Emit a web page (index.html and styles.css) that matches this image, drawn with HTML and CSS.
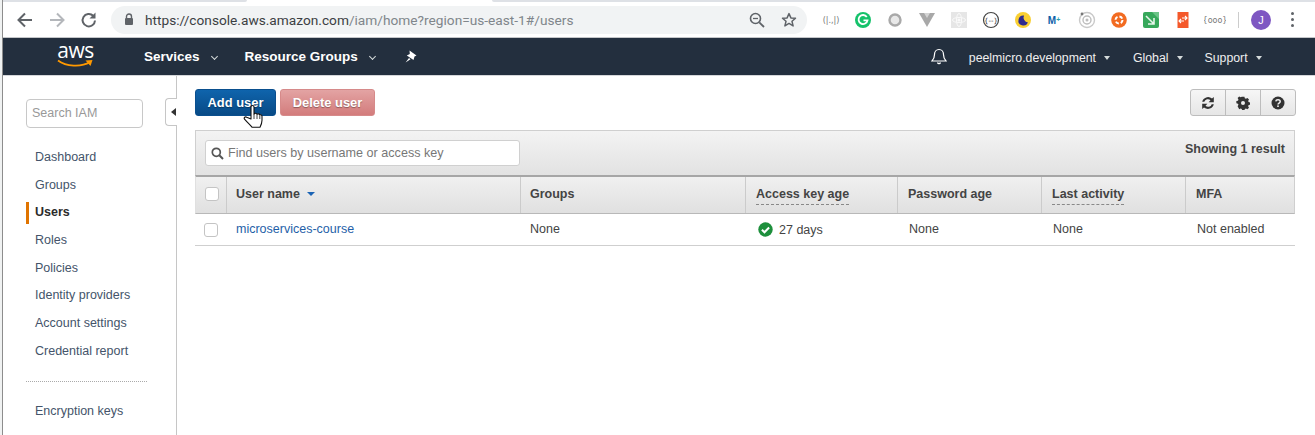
FILE: index.html
```html
<!DOCTYPE html>
<html>
<head>
  <meta charset="UTF-8">
  <title>IAM Management Console</title>
  <link rel="stylesheet" href="styles.css">
</head>
<body>
<div class="page">
  <div class="tabstrip"><div class="tab-left"></div><div class="tab-right"></div></div>

  <!-- browser toolbar -->
  <div class="chrome">
    <svg class="chrome-btn" width="20" height="20" viewBox="0 0 20 20"><path d="M17 10H4M10 3.500 3.500 10l6.500 6.500" fill="none" stroke="#5f6368" stroke-width="2"/></svg>
    <svg class="chrome-btn" width="20" height="20" viewBox="0 0 20 20"><path d="M3 10h13M10 3.500l6.500 6.500-6.500 6.500" fill="none" stroke="#b4b7bb" stroke-width="2"/></svg>
    <svg class="chrome-btn" width="20" height="20" viewBox="0 0 20 20"><path d="M16 10.500a6.200 6.200 0 1 1-1.800-4.700" fill="none" stroke="#5f6368" stroke-width="2"/><path d="M16.500 2.500v6h-6z" fill="#5f6368"/></svg>
    <div class="omnibox">
      <svg width="10" height="13" viewBox="0 0 10 13"><path d="M2.500 5V3.500a2.500 2.500 0 0 1 5 0V5" fill="none" stroke="#5f6368" stroke-width="1.400"/><rect x="1" y="5" width="8" height="7" rx="1" fill="#5f6368"/></svg>
      <div class="url"><span class="url-host">https://console.aws.amazon.com</span>/iam/home?region=us-east-1#/users</div>
      <svg width="16" height="16" viewBox="0 0 16 16"><circle cx="6.500" cy="6.500" r="5" fill="none" stroke="#5f6368" stroke-width="1.600"/><path d="M10.300 10.300 15 15" stroke="#5f6368" stroke-width="1.800"/><path d="M4 6.500h5" stroke="#5f6368" stroke-width="1.300"/></svg>
      <svg class="omni-star" width="16" height="16" viewBox="0 0 16 16"><path d="M8 1.600l1.900 4.300 4.600.4-3.500 3 1.100 4.600L8 11.400l-4.100 2.500 1.100-4.600-3.500-3 4.600-.4z" fill="none" stroke="#5f6368" stroke-width="1.500" stroke-linejoin="round"/></svg>
    </div>
    <div class="exts">
      <svg class="ext" width="22" height="22" viewBox="0 0 22 22"><text x="11" y="14" text-anchor="middle" class="ext-txt">(|.,|)</text></svg>
      <svg class="ext" width="22" height="22" viewBox="0 0 22 22"><circle cx="11" cy="11" r="8" fill="#15c26b"/><path d="M14.800 8a4.500 4.500 0 1 0 .7 3.300H11.500" fill="none" stroke="#fff" stroke-width="1.800"/></svg>
      <svg class="ext" width="22" height="22" viewBox="0 0 22 22"><circle cx="11" cy="11" r="5.500" fill="#e8e8e8" stroke="#a9a9a9" stroke-width="2.400"/></svg>
      <svg class="ext" width="22" height="22" viewBox="0 0 22 22"><path d="M3 4h16l-8 14z" fill="#a8a8a8"/><path d="M8 4h6l-3 5z" fill="#d4d4d4"/></svg>
      <svg class="ext" width="22" height="22" viewBox="0 0 22 22"><rect x="3" y="3" width="16" height="16" fill="#e6e6e6"/><circle cx="11" cy="11" r="1.600" fill="#fafafa"/><ellipse cx="11" cy="11" rx="6.500" ry="2.500" fill="none" stroke="#fafafa"/><ellipse cx="11" cy="11" rx="2.500" ry="6.500" fill="none" stroke="#fafafa"/></svg>
      <svg class="ext" width="22" height="22" viewBox="0 0 22 22"><circle cx="11" cy="11" r="7.500" fill="#fff" stroke="#444" stroke-width="1.200"/><text x="11" y="13.500" text-anchor="middle" class="ext-mini">{--}</text></svg>
      <svg class="ext" width="22" height="22" viewBox="0 0 22 22"><circle cx="11" cy="11" r="8" fill="#f9cf33"/><path d="M12 6.500a5 5 0 1 0 4 7 5 5 0 0 1-4-7z" fill="#2f2a8f"/></svg>
      <svg class="ext" width="22" height="22" viewBox="0 0 22 22"><text x="10" y="15" text-anchor="middle" class="ext-m">M<tspan class="ext-plus" dy="-2">+</tspan></text></svg>
      <svg class="ext" width="22" height="22" viewBox="0 0 22 22"><circle cx="11" cy="11" r="7.500" fill="none" stroke="#c9c9c9" stroke-width="1.400"/><circle cx="11" cy="11" r="4" fill="none" stroke="#bdbdbd" stroke-width="1.400"/><circle cx="11" cy="11" r="1.500" fill="#bdbdbd"/><circle cx="6" cy="5" r="1.400" fill="#777"/></svg>
      <svg class="ext" width="22" height="22" viewBox="0 0 22 22"><circle cx="11" cy="11" r="7.800" fill="#f26b21"/><circle cx="11" cy="11" r="3.500" fill="none" stroke="#fff" stroke-width="2" stroke-dasharray="3.500 2"/></svg>
      <svg class="ext" width="22" height="22" viewBox="0 0 22 22"><rect x="3" y="3" width="16" height="16" rx="2" fill="#37a85b"/><path d="M3 3h9l7 7V3z" fill="#6cc488"/><path d="M6 7l8 8M14 9v6H8" fill="none" stroke="#e8f6ec" stroke-width="1.600"/></svg>
      <svg class="ext" width="22" height="22" viewBox="0 0 22 22"><rect x="5.500" y="3" width="11" height="16" fill="#f4582a"/><path d="M7 12h5M9 10l-2 2 2 2M15 9h-5M13 7l2 2-2 2" fill="none" stroke="#fff" stroke-width="1.100"/></svg>
      <svg class="ext" width="22" height="22" viewBox="0 0 22 22"><text x="11" y="14" text-anchor="middle" class="ext-txt">{ooo}</text></svg>
      <div class="ext-sep"></div>
      <div class="avatar">J</div>
      <div class="dots"><i></i><i></i><i></i></div>
    </div>
  </div>

  <!-- aws console nav -->
  <div class="topnav">
    <div class="logo">
      <span class="logo-word">aws</span>
      <svg class="logo-smile" width="37" height="9" viewBox="0 0 37 9"><path d="M1 1.500C9 7.500 24 8.500 33 3" fill="none" stroke="#f90" stroke-width="1.800"/><path d="M28.500 1.500 35.500 1 33.500 7z" fill="#f90"/></svg>
    </div>
    <a class="nav-main nav-services">Services <span class="chev"></span></a>
    <a class="nav-main nav-groups">Resource Groups <span class="chev"></span></a>
    <svg class="pin" width="12" height="13" viewBox="0 0 12 13"><path d="M4.500 .5l7 5-2 1-1 3.500L1.800 5.500l3-1.500zM4 8 .6 12.500 5.500 9.300z" fill="#fff"/></svg>
    <svg class="bell" width="16" height="17" viewBox="0 0 16 17"><path d="M8 1.500c-3 0-4.500 2.500-4.500 5 0 3-1 5-2.500 6.500h14c-1.500-1.500-2.500-3.500-2.500-6.500 0-2.500-1.500-5-4.500-5zM6.500 14.500c.4 1.500 2.600 1.500 3 0" fill="none" stroke="#fff" stroke-width="1.200"/></svg>
    <a class="nav-side nav-account">peelmicro.development<span class="caret"></span></a>
    <a class="nav-side nav-region">Global<span class="caret"></span></a>
    <a class="nav-side">Support<span class="caret"></span></a>
  </div>

  <div class="main">
    <div class="sidebar">
      <div class="side-search">Search IAM</div>
      <ul class="side-list">
        <li>Dashboard</li>
        <li>Groups</li>
        <li class="active">Users</li>
        <li>Roles</li>
        <li>Policies</li>
        <li>Identity providers</li>
        <li>Account settings</li>
        <li>Credential report</li>
      </ul>
      <div class="side-rule"></div>
      <div class="side-extra">Encryption keys</div>
      <div class="collapse-tab"><span class="collapse-arrow"></span></div>
    </div>

    <div class="content">
      <div class="actions">
        <button class="btn btn-primary">Add user</button>
        <button class="btn btn-danger">Delete user</button>
        <div class="tools">
          <span class="tool"><svg width="14" height="14" viewBox="0 0 14 14"><path d="M1.200 5.800A6 6 0 0 1 11 2.600L12.800 1v5.200H7.600l1.900-1.900A3.700 3.700 0 0 0 3.300 5.800zM12.800 8.200A6 6 0 0 1 3 11.400L1.200 13V7.800h5.200l-1.900 1.900a3.700 3.700 0 0 0 6.200-1.500z" fill="#333"/></svg></span>
          <span class="tool"><svg width="14" height="14" viewBox="0 0 14 14"><path d="M5.800 1h2.400l.4 1.700 1.200.5 1.500-.9 1.700 1.700-.9 1.500.5 1.200 1.700.4v2.400l-1.700.4-.5 1.200.9 1.500-1.700 1.700-1.500-.9-1.200.5-.4 1.700H5.800l-.4-1.700-1.200-.5-1.500.9L1 11.100l.9-1.500-.5-1.200L-.3 8V5.600l1.700-.4.5-1.200L1 2.500 2.700.8l1.500.9 1.200-.5z" transform="translate(.65 -.3) scale(.95)" fill="#333"/><circle cx="7" cy="7" r="2" fill="#eee"/></svg></span>
          <span class="tool"><svg width="14" height="14" viewBox="0 0 14 14"><circle cx="7" cy="7" r="6.500" fill="#333"/><path d="M4.800 5.400C5 3.200 9.200 3.300 9.200 5.500c0 1.600-2.200 1.500-2.200 3" fill="none" stroke="#eee" stroke-width="1.500"/><rect x="6.200" y="9.400" width="1.600" height="1.600" fill="#eee"/></svg></span>
        </div>
      </div>

      <div class="panel">
        <div class="panel-bar">
          <div class="filter">
            <svg width="13" height="13" viewBox="0 0 13 13"><circle cx="5.300" cy="5.300" r="4" fill="none" stroke="#555" stroke-width="1.700"/><path d="M8.300 8.300 12 12" stroke="#555" stroke-width="2"/></svg>
            <span>Find users by username or access key</span>
          </div>
          <div class="result-count">Showing 1 result</div>
        </div>
        <div class="grid-row grid-head">
          <div class="cell cell-check"><span class="check"></span></div>
          <div class="cell">User name <span class="sort-arrow"></span></div>
          <div class="cell">Groups</div>
          <div class="cell"><span class="dashed">Access key age</span></div>
          <div class="cell">Password age</div>
          <div class="cell"><span class="dashed">Last activity</span></div>
          <div class="cell">MFA</div>
        </div>
        <div class="grid-row grid-body">
          <div class="cell cell-check"><span class="check"></span></div>
          <div class="cell"><a class="user-link">microservices-course</a></div>
          <div class="cell">None</div>
          <div class="cell key-age">
            <svg width="15" height="15" viewBox="0 0 15 15"><circle cx="7.500" cy="7.500" r="7.200" fill="#1d8f3c"/><path d="M3.900 7.700l2.600 2.600 4.600-4.800" fill="none" stroke="#fff" stroke-width="2"/></svg>
            27 days
          </div>
          <div class="cell">None</div>
          <div class="cell">None</div>
          <div class="cell">Not enabled</div>
        </div>
      </div>
    </div>
  </div>

  <svg class="cursor" width="20" height="25" viewBox="0 0 20 25"><path d="M8 3c0-2 3-2 3 0v7c1-1 2.500-1 3 .3 1-.8 2.500-.5 2.800.7 1-.5 2.200 0 2.200 1.200v4c0 3-1 5-2 7H9c-1.500-2-4-4-7.500-8-1-1.500.8-3 2.200-2L8 15z" fill="#fff" stroke="#111" stroke-width="1.100" stroke-linejoin="round"/><path d="M11 10v5M14 10.500V15M16.800 11.500V15" stroke="#111" stroke-width=".8"/></svg>
</div>
</body>
</html>
```

FILE: styles.css
```css
* { box-sizing: border-box; }

html, body {
  margin: 0;
  padding: 0;
  height: 100%;
  overflow: hidden;
  background: #fff;
}

.page {
  position: relative;
  height: 435px;
  display: flex;
  flex-direction: column;
  padding-left: 3px;
  background: linear-gradient(90deg, #f0f2f2 2px, #8d8d8d 2px);
  font-family: "Liberation Sans", Arial, sans-serif;
  font-size: 12.5px;
  color: #444;
}

/* browser */
.tabstrip {
  height: 2px;
  background: #fff;
  display: flex;
}
.tab-left {
  width: 244px;
  background: #dee1e6;
  border-radius: 0 0 3px 0;
}
.tab-right {
  margin-left: 245px;
  flex: 1;
  background: #dee1e6;
  border-radius: 0 0 0 3px;
}

.chrome {
  height: 36px;
  background: #fff;
  display: flex;
  align-items: center;
  padding-left: 12px;
  border-bottom: 1px solid #c4c6c9;
}
.chrome-btn { margin-right: 12px; flex: none; }

.omnibox {
  width: 696px;
  height: 28px;
  border-radius: 14px;
  background: #f1f3f4;
  display: flex;
  align-items: center;
  padding-left: 13px;
  flex: none;
}
.url {
  margin-left: 11px;
  font-family: Roboto, "Noto Sans", sans-serif;
  font-size: 13.7px;
  color: #80868b;
  width: 604px;
  white-space: nowrap;
}
.url-host { color: #3c4043; }
.omni-star { margin-left: 16px; }

.exts {
  display: flex;
  align-items: center;
  gap: 10px;
  margin-left: 13px;
}
.ext { flex: none; }
.ext-txt { font-size: 8px; fill: #777; font-family: "DejaVu Sans", sans-serif; }
.ext-mini { font-size: 7px; fill: #333; font-family: "DejaVu Sans", sans-serif; }
.ext-m { font-size: 10px; font-weight: bold; fill: #0d5ea8; font-family: "Liberation Sans", sans-serif; }
.ext-plus { font-size: 7px; fill: #2a9fb0; }
.ext-sep { width: 1px; height: 16px; background: #ccc; margin-left: 2px; }
.avatar {
  width: 20px;
  height: 20px;
  border-radius: 50%;
  background: #7e57c2;
  color: #fff;
  font-size: 11px;
  text-align: center;
  line-height: 20px;
  margin-left: 2px;
}
.dots { display: flex; flex-direction: column; gap: 3px; margin-left: 10px; }
.dots i { width: 3px; height: 3px; background: #5f6368; border-radius: 50%; }

/* aws nav */
.topnav {
  height: 38px;
  background: #232f3e;
  color: #fff;
  display: flex;
  align-items: center;
  border-bottom: 1px solid #d5d7da;
}
.logo {
  width: 37px;
  margin-left: 54px;
  position: relative;
  height: 30px;
}
.logo-word {
  display: block;
  font-family: "Open Sans", "Liberation Sans", sans-serif;
  font-size: 21px;
  line-height: 22px;
  letter-spacing: -.5px;
  text-align: center;
  margin-top: -3px;
}
.logo-smile { position: absolute; left: 0; top: 17px; }

.nav-main {
  font-size: 13.5px;
  font-weight: bold;
  white-space: nowrap;
  display: flex;
  align-items: center;
}
.nav-services { margin-left: 50px; }
.nav-groups { margin-left: 28px; }
.chev {
  width: 5px;
  height: 5px;
  border-right: 1.5px solid #d5dbdb;
  border-bottom: 1.5px solid #d5dbdb;
  transform: rotate(45deg);
  margin: 0 0 0 12px;
}
.pin { margin-left: 30px; }
.bell { margin-left: 514px; }

.nav-side {
  font-size: 12.3px;
  display: flex;
  align-items: center;
  white-space: nowrap;
  color: #eee;
  margin-left: 22px;
  padding-top: 3px;
}
.nav-account { margin-left: 22px; }
.nav-region { margin-left: 23px; }
.caret {
  width: 0;
  height: 0;
  border-left: 3.5px solid transparent;
  border-right: 3.5px solid transparent;
  border-top: 4px solid #d5dbdb;
  margin-left: 8px;
}

/* page */
.main {
  flex: 1;
  background: #fff;
  display: flex;
  min-height: 0;
}

.sidebar {
  position: relative;
  width: 174px;
  flex: none;
  border-right: 1px solid #c6c6c6;
  padding: 23px 0 0 23px;
}
.side-search {
  width: 117px;
  height: 29px;
  border: 1px solid #c8c8c8;
  border-radius: 4px;
  padding: 0 5px;
  line-height: 27px;
  color: #999;
}
.side-list {
  list-style: none;
  margin: 16px 0 0;
  padding: 0;
}
.side-list li {
  height: 27.7px;
  line-height: 27.7px;
  padding-left: 9px;
  color: #44546a;
  position: relative;
}
.side-list .active { color: #2b2b2b; font-weight: bold; }
.side-list .active::before {
  content: "";
  position: absolute;
  left: 0;
  top: 3px;
  width: 3px;
  height: 22px;
  background: #e07400;
}
.side-rule {
  width: 121px;
  margin-top: 15px;
  border-top: 1px dotted #aaa;
}
.side-extra {
  margin-top: 21px;
  padding-left: 9px;
  color: #44546a;
  line-height: 17px;
}
.collapse-tab {
  position: absolute;
  right: -1px;
  top: 22px;
  width: 12px;
  height: 28px;
  background: #fff;
  border: 1px solid #c6c6c6;
  border-right: 0;
  border-radius: 4px 0 0 4px;
  display: flex;
  align-items: center;
  padding-left: 5px;
}
.collapse-arrow {
  width: 0;
  height: 0;
  border-top: 4px solid transparent;
  border-bottom: 4px solid transparent;
  border-right: 5px solid #333;
}

.content {
  flex: none;
  width: 1100px;
  margin-left: 18px;
  padding-top: 13px;
}

.actions {
  display: flex;
  align-items: center;
  height: 27px;
}
.btn {
  height: 27px;
  border-radius: 3px;
  font-family: inherit;
  font-size: 12.9px;
  font-weight: bold;
  color: #fff;
  padding: 0;
  text-shadow: 0 1px 1px rgba(0,0,0,.35);
}
.btn-primary {
  width: 81px;
  background: linear-gradient(#0f64ac, #084a86);
  border: 1px solid #0a4f8e;
}
.btn-danger {
  width: 95px;
  margin-left: 4px;
  background: linear-gradient(#e3a3a3, #d37c7c);
  border: 1px solid #d68a8a;
}
.tools {
  margin-left: auto;
  margin-right: -1px;
  display: flex;
  width: 106px;
  border: 1px solid #bdbdbd;
  border-radius: 3px;
  height: 27px;
  background: linear-gradient(#f6f6f6, #e6e6e6);
}
.tool {
  flex: 1;
  display: flex;
  align-items: center;
  justify-content: center;
  border-left: 1px solid #bdbdbd;
}
.tool:first-child { border-left: 0; }

.panel { margin-top: 14px; }
.panel-bar {
  height: 45px;
  background: linear-gradient(#f3f3f3, #e2e2e2);
  border: 1px solid #cfcfcf;
  border-bottom: 0;
  display: flex;
  justify-content: space-between;
  padding: 9px 9px 0;
}
.filter {
  width: 315px;
  height: 26px;
  background: #fff;
  border: 1px solid #d0d0d0;
  border-radius: 3px;
  display: flex;
  align-items: center;
  gap: 4px;
  padding-left: 5px;
  color: #777;
  font-size: 12.6px;
}
.result-count {
  font-weight: bold;
  color: #444;
  line-height: 18px;
}

.grid-row {
  display: grid;
  grid-template-columns: 30px 294px 225px 152px 144px 144px 1fr;
}
.grid-head {
  height: 39px;
  background: linear-gradient(#f0f0f0, #e0e0e0);
  border-top: 2px solid #a6a6a6;
  border-bottom: 1px solid #b8b8b8;
  border-right: 1px solid #cfcfcf;
  border-left: 1px solid #e0e0e0;
  font-weight: bold;
  color: #444;
}
.grid-head .cell {
  border-left: 1px solid #cbcbcb;
  display: flex;
  align-items: center;
  padding: 0 0 2px 9px;
  gap: 6px;
}
.grid-head .cell:nth-child(n+4) { padding-left: 10px; }
.grid-head .cell-check { border-left: 0; }
.grid-body {
  height: 32px;
  border-bottom: 1px solid #cfcfcf;
}
.grid-body .cell {
  display: flex;
  align-items: center;
  padding: 0 0 2px 11px;
  color: #444;
}
.grid-body .cell:nth-child(n+5) { padding-left: 13px; }
.grid-body .cell-check { padding: 0 0 0 9px; }
.grid-body .key-age { padding: 0 0 0 14px; gap: 6px; }

.check {
  width: 14px;
  height: 14px;
  border: 1px solid #c4c4c4;
  border-radius: 3px;
  background: #fff;
}
.sort-arrow {
  width: 0;
  height: 0;
  border-left: 4.5px solid transparent;
  border-right: 4.5px solid transparent;
  border-top: 4.5px solid #1b64b5;
  margin-left: 1px;
}
.dashed {
  border-bottom: 1px dashed #888;
  padding-bottom: 3px;
  margin-top: 4px;
}
.user-link { color: #1f5fa8; }

.cursor {
  position: absolute;
  left: 243px;
  top: 104px;
}
```
